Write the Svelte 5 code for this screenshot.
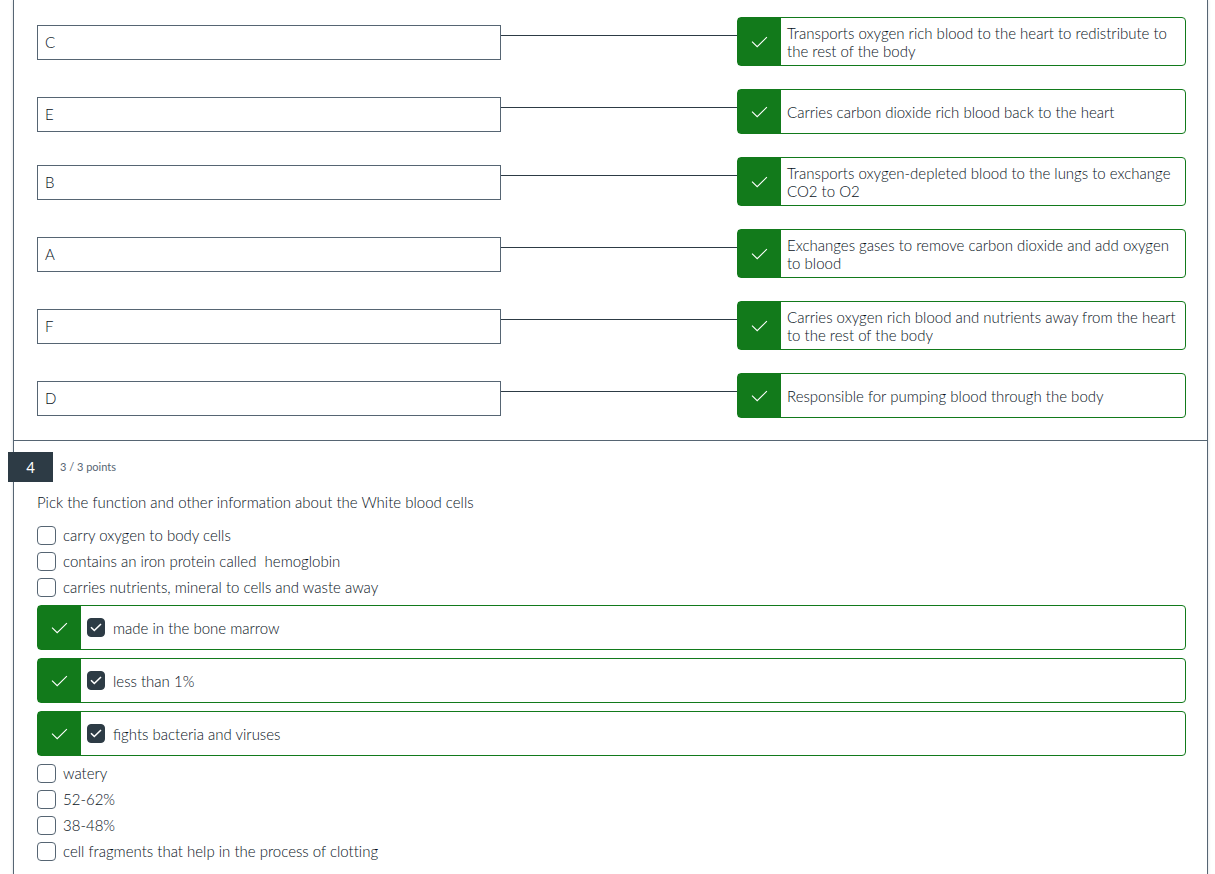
<script>
  const pairs = [
    { key: 'C', answer: 'Transports oxygen rich blood to the heart to redistribute to the rest of the body' },
    { key: 'E', answer: 'Carries carbon dioxide rich blood back to the heart' },
    { key: 'B', answer: 'Transports oxygen-depleted blood to the lungs to exchange CO2 to O2' },
    { key: 'A', answer: 'Exchanges gases to remove carbon dioxide and add oxygen to blood' },
    { key: 'F', answer: 'Carries oxygen rich blood and nutrients away from the heart to the rest of the body' },
    { key: 'D', answer: 'Responsible for pumping blood through the body' }
  ];

  const choices = [
    { text: 'carry oxygen to body cells', correct: false },
    { text: 'contains an iron protein called \u00a0hemoglobin', correct: false },
    { text: 'carries nutrients, mineral to cells and waste away', correct: false },
    { text: 'made in the bone marrow', correct: true },
    { text: 'less than 1%', correct: true },
    { text: 'fights bacteria and viruses', correct: true },
    { text: 'watery', correct: false },
    { text: '52-62%', correct: false },
    { text: '38-48%', correct: false },
    { text: 'cell fragments that help in the process of clotting', correct: false }
  ];
</script>

{#snippet mark()}
  <span class="mark">
    <svg width="17" height="12" viewBox="0 0 17 12" aria-hidden="true">
      <path d="M1 5.6 6.2 10.7 15.9 1.2" />
    </svg>
  </span>
{/snippet}

<main class="quiz">
  <section class="question matching">
    {#each pairs as pair}
      <div class="pair">
        <div class="key">{pair.key}</div>
        <div class="line"></div>
        <div class="card">
          {@render mark()}
          <span class="answer">{pair.answer}</span>
        </div>
      </div>
    {/each}
  </section>

  <section class="question">
    <header>
      <span class="number">4</span>
      <span class="points">3 / 3 points</span>
    </header>
    <p class="prompt">Pick the function and other information about the White blood cells</p>
    <ul class="choices">
      {#each choices as choice, i}
        <li class:card={choice.correct}>
          {#if choice.correct}{@render mark()}{/if}
          <label class="choice" for="choice-{i}">
            <span class="tick">
              <input type="checkbox" id="choice-{i}" checked={choice.correct} />
              {#if choice.correct}
                <svg width="12" height="9" viewBox="0 0 12 9" aria-hidden="true">
                  <path d="M1 4.2 4.3 7.5 11 1" />
                </svg>
              {/if}
            </span>
            <span>{choice.text}</span>
          </label>
        </li>
      {/each}
    </ul>
  </section>
</main>

<style>
  :global(body) {
    margin: 0;
    background: #fff;
    overflow: hidden;
  }

  .quiz {
    box-sizing: border-box;
    min-height: 100vh;
    margin: 0 7px 0 13px;
    border: solid #566573;
    border-width: 0 1px;
    box-shadow: 0 0 3px rgba(45, 59, 69, 0.2);
    color: #07121b;
    font: 300 15px/18px Lato, sans-serif;
    font-variant-ligatures: no-common-ligatures;
  }

  .question {
    padding: 0 21px 12px 23px;
  }

  .matching {
    display: flex;
    flex-direction: column;
    gap: 23px;
    padding-top: 17px;
    padding-bottom: 22px;
    border-bottom: 1px solid #566573;
  }

  .pair {
    display: grid;
    grid-template-columns: 464fr 236fr 449fr;
    align-items: start;
  }

  .key {
    box-sizing: border-box;
    margin-top: 8px;
    padding: 7px;
    height: 35px;
    border: 1px solid #566573;
  }

  .line {
    margin-top: 18px;
    border-top: 1px solid #2d3b45;
  }

  .card {
    box-sizing: border-box;
    display: flex;
    min-height: 45px;
    border: 1px solid #127a1b;
    border-radius: 4px;
    background: #fff;
    font-variant-ligatures: normal;
  }

  .mark {
    display: flex;
    flex: none;
    align-items: center;
    justify-content: center;
    width: 43px;
    background: #127a1b;
  }

  svg {
    fill: none;
    stroke: #fff;
    stroke-width: 1.1;
  }

  .answer {
    align-self: center;
    padding: 6px 0 5px 6px;
  }

  header {
    display: flex;
    align-items: center;
    gap: 7px;
    margin: 11px 0 0 -29px;
  }

  .number {
    width: 45px;
    background: #2d3b45;
    color: #fff;
    font-weight: 400;
    line-height: 30px;
    text-align: center;
  }

  .points {
    color: #566573;
    font-size: 11px;
    font-weight: 400;
  }

  .prompt {
    margin: 11px 0;
  }

  .choices {
    margin: 0;
    padding: 0;
    list-style: none;
  }

  .choice {
    display: flex;
    align-items: center;
    gap: 7px;
    min-height: 26px;
  }

  li.card {
    margin: 5px 0 8px;
  }

  li.card + li.card {
    margin-top: 0;
  }

  li.card:has(+ li:not(.card)) {
    margin-bottom: 4px;
  }

  .card .choice {
    gap: 8px;
    padding-left: 6px;
  }

  .tick {
    display: grid;
    place-items: center;
  }

  .tick > * {
    grid-area: 1 / 1;
  }

  .tick svg {
    pointer-events: none;
    stroke-width: 1.6;
  }

  input {
    box-sizing: border-box;
    width: 19px;
    height: 19px;
    margin: 0;
    appearance: none;
    border: 1px solid #566573;
    border-radius: 4px;
    background: #fff;
  }

  input:checked {
    width: 18px;
    border-color: #2d3b45;
    background: #2d3b45;
  }
</style>
